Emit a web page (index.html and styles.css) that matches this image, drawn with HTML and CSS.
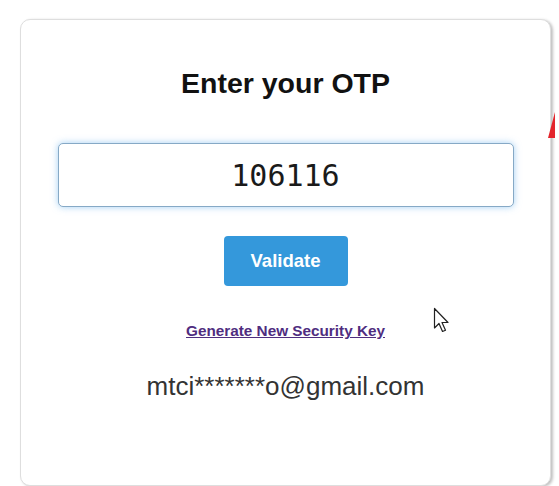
FILE: index.html
```html
<!DOCTYPE html>
<html lang="en">
<head>
    <meta charset="UTF-8">
    <meta name="viewport" content="width=device-width, initial-scale=1.0">
    <title>Enter your OTP</title>
    <link rel="stylesheet" href="styles.css">
</head>
<body>
    <div class="otp-card">
        <h2 class="otp-title">Enter your OTP</h2>
        <form id="otpForm" class="otp-form">
            <input type="text" id="otp" name="otp" class="otp-input" value="106116" maxlength="6">
            <button type="submit" class="otp-button">Validate</button>
        </form>
        <a href="#" class="otp-link">Generate New Security Key</a>
        <p class="otp-email">mtci*******o@gmail.com</p>
    </div>

    <!-- red arrow tip coming in from the right -->
    <svg class="arrow-tip" width="10" height="28" viewBox="0 0 10 28">
        <polygon points="8,0 1,26 8,26" fill="#e3242b"/>
    </svg>

    <!-- mouse pointer -->
    <svg class="pointer" width="18" height="27" viewBox="0 0 18 27">
        <path d="M1.5 1.5 L1.5 21 L6 16.5 L9.5 24.5 L12.5 23.2 L9 15.5 L15 15.5 Z" fill="#fff" stroke="#222" stroke-width="1.2" stroke-linejoin="round"/>
    </svg>
</body>
</html>
```

FILE: styles.css
```css
body {
    margin: 0;
    background: #fff;
    font-family: "Liberation Sans", Arial, sans-serif;
}

.otp-card {
    box-sizing: border-box;
    width: 531px;
    height: 467px;
    margin: 19px 0 0 20px;
    padding: 47px 36px 0;
    background: #fff;
    border: 1px solid #dedede;
    border-radius: 10px;
    box-shadow: 2px 1px 3px rgba(0, 0, 0, 0.25);
    text-align: center;
}

.otp-title {
    margin: 0;
    font-size: 28.5px;
    line-height: 32px;
    font-weight: bold;
    color: #111;
}

.otp-form {
    display: flex;
    flex-direction: column;
    align-items: center;
    margin: 44px 0 0;
}

.otp-input {
    box-sizing: border-box;
    width: 456px;
    height: 64px;
    padding: 0 10px;
    border: 1px solid #86a9c6;
    border-radius: 5px;
    box-shadow: 0 0 7px rgba(90, 170, 235, 0.55);
    font-family: "DejaVu Sans Mono", monospace;
    font-size: 30px;
    color: #1a1a1a;
    text-align: center;
    outline: none;
}

.otp-button {
    width: 124px;
    height: 50px;
    margin-top: 29px;
    background-color: #3498db;
    color: #fff;
    border: none;
    border-radius: 4px;
    font-family: "Liberation Sans", Arial, sans-serif;
    font-size: 18.5px;
    font-weight: bold;
    cursor: pointer;
}

.otp-link {
    display: block;
    margin-top: 36px;
    font-size: 15.3px;
    line-height: 18px;
    font-weight: bold;
    color: #4f2d7f;
}

.otp-email {
    margin: 31px 0 0;
    font-size: 26px;
    line-height: 30px;
    color: #333;
}

.arrow-tip {
    position: absolute;
    left: 547px;
    top: 112px;
}

.pointer {
    position: absolute;
    left: 433px;
    top: 307px;
}
```
